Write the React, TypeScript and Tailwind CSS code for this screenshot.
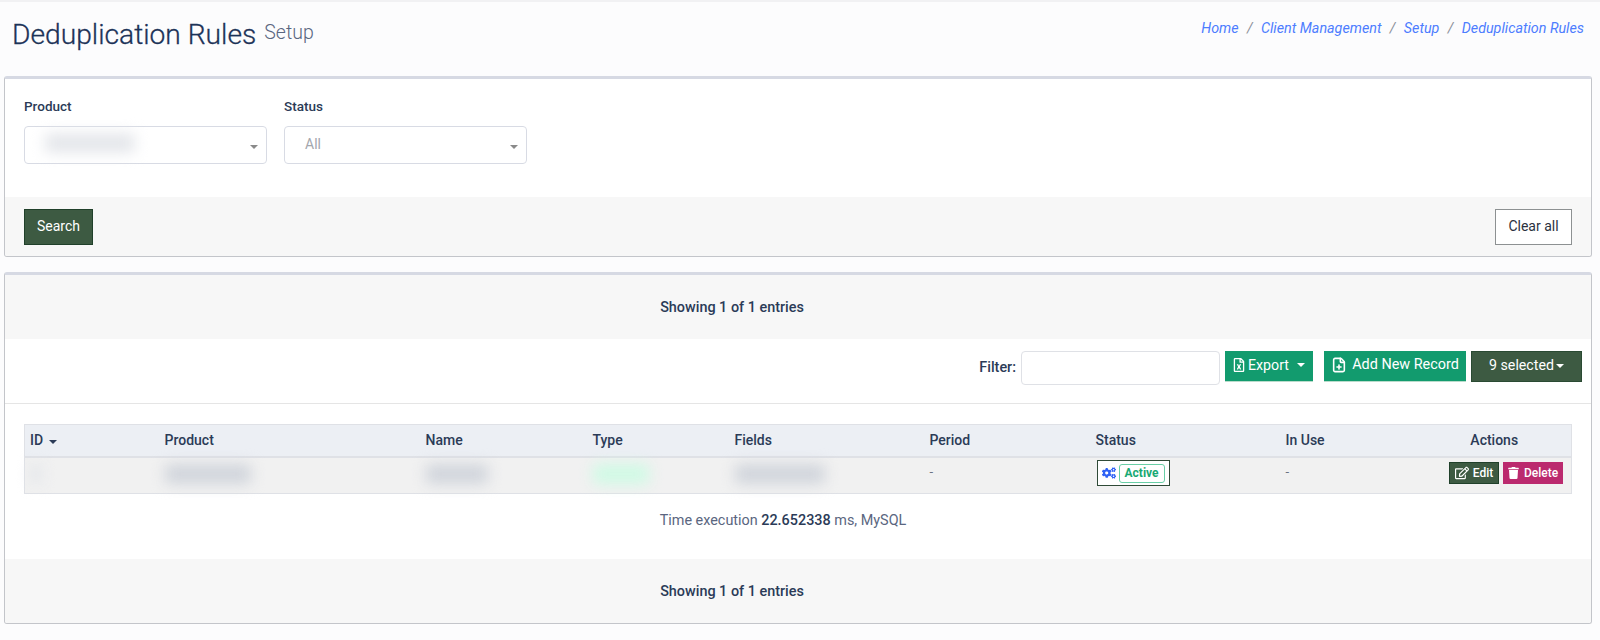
import { FilePlus } from "lucide-react";
import { FaCogs, FaRegEdit, FaRegFileExcel, FaTrash } from "react-icons/fa";

const columnas = [
  { nome: "Product", w: "w-[261px]" },
  { nome: "Name", w: "w-[167px]" },
  { nome: "Type", w: "w-[142px]" },
  { nome: "Fields", w: "w-[195px]" },
  { nome: "Period", w: "w-[166px]" },
  { nome: "Status", w: "w-[190px]" },
  { nome: "In Use", w: "w-[150px]" },
];

function Caret({ className = "" }: { className?: string }) {
  return (
    <span
      className={`inline-block h-0 w-0 border-x-[4px] border-t-[4px] border-x-transparent ${className}`}
    />
  );
}

function Borrao({ w, cor = "bg-gray-300" }: { w: string; cor?: string }) {
  return <div className={`mb-[3px] h-[20px] rounded-sm blur-[7px] ${w} ${cor}`} />;
}

function Campo({ label, children }: { label: string; children: React.ReactNode }) {
  return (
    <div className="w-[243px]">
      <p className="mb-[10px] text-[13.5px] leading-5 font-medium text-[#2b3b57]">{label}</p>
      <div className="relative flex h-[38px] items-center rounded-[4px] border border-[#d8dbe4] bg-white pb-[2px] pl-[20px] text-sm text-[#a3a6ad]">
        {children}
        <Caret className="absolute top-[18px] right-[8px] border-t-[#8a8a8a]" />
      </div>
    </div>
  );
}

export default function App() {
  return (
    <div className="min-h-[640px] border-t-2 border-[#f1f1f3] bg-[#fcfcfd] px-1 font-['Roboto',sans-serif] text-sm text-[#2b3b57]">
      <header className="flex h-[74px] justify-between pr-3 pl-2">
        <div className="flex items-start pt-[15px]">
          <h1 className="text-[28.2px] leading-9 font-light text-[#1c3358] [-webkit-text-stroke:0.3px_#1c3358]">
            Deduplication Rules
          </h1>
          <span className="ml-2 pt-[2px] text-[19.5px] leading-7 font-light text-[#5a6680]">Setup</span>
        </div>
        <nav className="flex gap-[8.3px] pt-4 text-[14.3px] leading-5 text-[#4d7dff] italic">
          <span>Home</span>
          <span className="text-[#8b8f99]">/</span>
          <span>Client Management</span>
          <span className="text-[#8b8f99]">/</span>
          <span>Setup</span>
          <span className="text-[#8b8f99]">/</span>
          <span>Deduplication Rules</span>
        </nav>
      </header>

      <section className="mr-1 overflow-hidden rounded-[3px] border border-t-[3px] border-[#c3c5ca] border-t-[#d6d9e3] bg-white">
        <div className="flex h-[118px] gap-[17px] px-[19px] pt-[17px]">
          <Campo label="Product">
            <Borrao w="w-[90px]" cor="bg-gray-200" />
          </Campo>
          <Campo label="Status">All</Campo>
        </div>
        <div className="flex h-[59px] items-start justify-between bg-[#f7f7f7] px-[19px] pt-3">
          <button
            type="button"
            className="h-[36px] w-[69px] border border-[#20402a] bg-[#3d5a42] pb-[2px] text-sm text-white"
          >
            Search
          </button>
          <button
            type="button"
            className="h-[36px] w-[77px] border border-[#8d9192] bg-white pb-[2px] text-sm text-[#2b3140]"
          >
            Clear all
          </button>
        </div>
      </section>

      <section className="mt-[15px] mr-1 overflow-hidden rounded-[3px] border border-t-[3px] border-[#c3c5ca] border-t-[#d6d9e3] bg-white">
        <div className="flex h-[64px] items-center justify-center bg-[#f7f7f7] pt-[3px] pr-[132px] text-[14.4px] font-medium">
          Showing 1 of 1 entries
        </div>

        <div className="flex h-[65px] items-start justify-end border-b border-[#e5e5e5] pt-3 pr-[9px]">
          <span className="mt-[7px] mr-[5px] text-[14.4px] font-medium">Filter:</span>
          <input
            type="text"
            aria-label="Filter"
            className="h-[34px] w-[199px] rounded-[4px] border border-[#dfe1e6] bg-white"
          />
          <button
            type="button"
            className="ml-[5px] flex h-[31px] w-[88px] items-center justify-center border-b border-[#b9dccb] bg-[#129b6e] pb-[2px] text-[14.2px] text-white"
          >
            <FaRegFileExcel className="mr-[3px] h-[14px] w-[12px]" />
            Export
            <Caret className="ml-2 border-t-white" />
          </button>
          <button
            type="button"
            className="ml-[11px] flex h-[31px] w-[142px] items-center justify-center gap-[5px] border-b border-[#b9dccb] bg-[#129b6e] pb-[2px] text-[14.4px] text-white"
          >
            <FilePlus className="h-[16px] w-[16px]" strokeWidth={2.4} />
            Add New Record
          </button>
          <button
            type="button"
            className="ml-[5px] flex h-[31px] w-[111px] items-center justify-center border border-[#2a4a33] bg-[#3d5a42] pb-[2px] text-[14.2px] text-white"
          >
            9 selected
            <Caret className="ml-[2px] border-t-white" />
          </button>
        </div>

        <div className="h-[155px] px-[19px] pt-5">
          <table className="w-full table-fixed border-collapse border border-[#dfe1e6] text-sm">
            <thead>
              <tr className="h-[32px] border-b-2 border-[#dfe1e6] bg-[#eceff4] text-left">
                <th className="w-[140px] pb-[1px] pl-[5px] font-medium">
                  ID <Caret className="mb-[1px] ml-[2px] border-t-[#2b3b57]" />
                </th>
                {columnas.map((c) => (
                  <th key={c.nome} className={`pb-[1px] font-medium ${c.w}`}>
                    {c.nome}
                  </th>
                ))}
                <th className="pr-[18px] pb-[1px] text-center font-medium">Actions</th>
              </tr>
            </thead>
            <tbody>
              <tr className="h-[37px] bg-[#f1f1f1] text-[13px]">
                <td className="pl-[5px]">
                  <Borrao w="w-[12px]" cor="bg-gray-200" />
                </td>
                <td>
                  <Borrao w="w-[86px]" />
                </td>
                <td>
                  <Borrao w="w-[62px]" />
                </td>
                <td>
                  <Borrao w="w-[56px]" cor="bg-emerald-100" />
                </td>
                <td>
                  <Borrao w="w-[90px]" />
                </td>
                <td className="pb-[6px] text-gray-500">-</td>
                <td>
                  <div className="mb-[4px] ml-[1px] inline-flex h-[26px] items-center gap-[3px] border border-[#2f4a37] bg-white px-[4px] align-middle">
                    <FaCogs className="h-[14px] w-[14px] text-[#2f62f5]" />
                    <span className="rounded-[3px] border border-[#69cfa6] px-[5px] text-[12px] leading-[17px] font-bold text-[#19a974]">
                      Active
                    </span>
                  </div>
                </td>
                <td className="pb-[6px] text-gray-500">-</td>
                <td>
                  <div className="mb-[4px] flex justify-end gap-[4px] pr-2">
                    <button
                      type="button"
                      className="flex h-[22px] w-[50px] items-center justify-center gap-[4px] border border-[#20402a] bg-[#3d5a42] text-[12px] font-medium text-white"
                    >
                      <FaRegEdit className="h-[14px] w-[14px]" />
                      Edit
                    </button>
                    <button
                      type="button"
                      className="flex h-[22px] w-[60px] items-center justify-center gap-[5px] bg-[#bb2a6e] text-[12px] font-medium text-white"
                    >
                      <FaTrash className="h-[12px] w-[11px]" />
                      Delete
                    </button>
                  </div>
                </td>
              </tr>
            </tbody>
          </table>
          <p className="mt-[17px] pr-[30px] text-center text-[14.4px] leading-5 text-[#5a6680]">
            Time execution <b className="font-medium text-[#2b3b57]">22.652338</b> ms, MySQL
          </p>
        </div>

        <div className="flex h-[64px] items-center justify-center bg-[#f7f7f7] pt-[2px] pr-[132px] text-[14.4px] font-medium">
          Showing 1 of 1 entries
        </div>
      </section>
    </div>
  );
}
